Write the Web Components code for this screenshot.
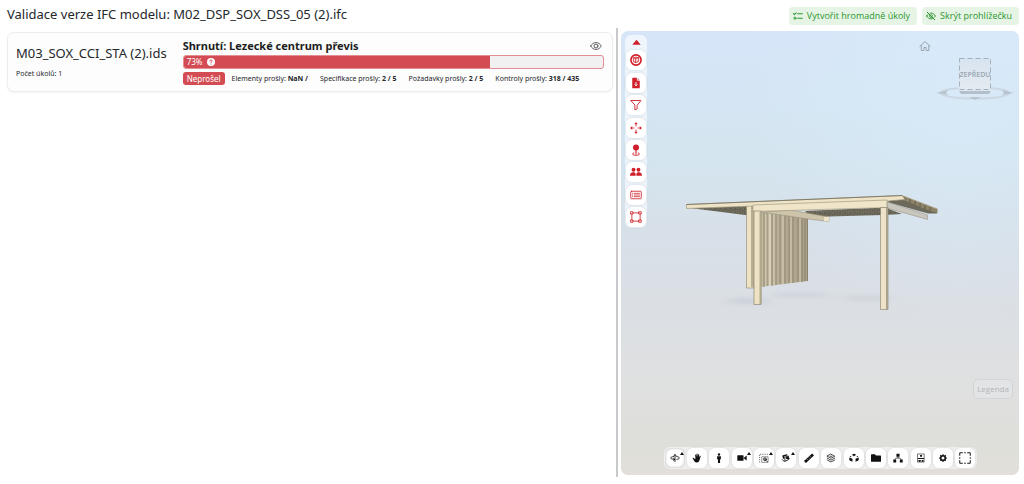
<!DOCTYPE html>
<html lang="cs">
<head>
<meta charset="utf-8">
<meta name="viewport" content="width=device-width, initial-scale=1">
<title>Validace verze IFC modelu</title>
<style>
  html, body { height: 100%; }
  body {
    margin: 0;
    background: #fff;
    color: #24272b;
    font-family: "Noto Sans", "Open Sans", sans-serif;
    font-size: 8px;
  }
</style>
</head>
<body>
<validation-app></validation-app>

<script>
const svg = (box, body) => `<svg viewBox="0 0 ${box} ${box}" fill="none" stroke="currentColor" stroke-linecap="round" stroke-linejoin="round" aria-hidden="true">${body}</svg>`;
const F = 'fill="currentColor" stroke="none"';

const ICONS = {
  tasks: svg(16, '<path stroke-width="1.7" d="M7.5 4.5H15M7.5 11.5H15M1 4.2l1.4 1.5L5 2.8"/><circle cx="3" cy="11.5" r="1.7" stroke-width="1.5"/>'),
  eyeOff: svg(16, '<path stroke-width="1.5" d="M1 8c1.600-3 4-4.600 7-4.600S13.400 5 15 8c-1.600 3-4 4.600-7 4.600S2.600 11 1 8z"/><circle cx="8" cy="8" r="2.300" stroke-width="1.500"/><path stroke="#e6f4e6" stroke-width="1.300" d="M3.500 1.500l11 11"/><path stroke-width="1.600" d="M2 2l12 12"/>'),
  eye: svg(16, '<path stroke-width="1.2" d="M1 8c1.600-3 4-4.600 7-4.600S13.400 5 15 8c-1.600 3-4 4.600-7 4.600S2.600 11 1 8z"/><circle cx="8" cy="8" r="2.600" stroke-width="1.300"/>'),
  help: svg(16, `<circle cx="8" cy="8" r="8" ${F}/><path stroke="#d44c53" stroke-width="2" d="M5.700 6.200c.1-1.500 1.100-2.200 2.300-2.200 1.300 0 2.300.8 2.300 2 0 1.500-2.300 1.600-2.300 3.200"/><circle cx="8" cy="12" r="1.200" fill="#d44c53" stroke="none"/>`),
  up: svg(16, `<path ${F} d="M8 3l7.500 9H.5z"/>`),
  home: svg(16, '<path stroke-width="1.300" d="M1 8.500L8 2l7 6.500M3 7.500V14h3.500v-4h3v4H13V7.500"/>'),
  model: svg(16, '<circle cx="8" cy="8" r="6.800" stroke-width="2.200"/><path fill="currentColor" fill-opacity=".15" stroke-width="1.100" d="M5 5l2.500-.8 4 .8v5l-4 1.500L5 10.500zM5 5l2.500.8 4-.8M7.500 5.800v5.700"/>'),
  fileDown: svg(16, `<path ${F} d="M4 1h5.500L13 4.500V15H3V2a1 1 0 0 1 1-1z"/><path stroke="#fff" stroke-width="1.200" d="M8 7v4.500M6.300 10l1.700 1.700L9.700 10M9.800 1v3.300H13"/>`),
  filter: svg(16, '<path stroke-width="1.200" d="M1.500 2h13L9.500 8.500V13l-3 1.500v-6z"/>'),
  move: svg(16, `<path stroke-width="1.100" d="M8 3.500V5.500M8 10.500v2M3.500 8H5.500M10.500 8h2"/><path ${F} d="M8 0l2.200 3H5.800zM8 16l2.200-3H5.800zM0 8l3-2.200v4.400zM16 8l-3-2.200v4.400z"/>`),
  pin: svg(16, `<circle cx="8" cy="4.500" r="4" ${F}/><path stroke-width="1.500" d="M8 8v5"/><path stroke-width="1.300" d="M5 12c-3 .8-2 3 3 3s6-2.200 3-3"/>`),
  people: svg(16, `<g ${F}><circle cx="4.700" cy="5" r="2.600"/><circle cx="11.300" cy="5" r="2.600"/><path d="M0 13c0-3 1.500-4.700 4-4.700 1.600 0 3 .6 3.500 2V13zM8.500 13v-2.700c.5-1.400 1.900-2 3.500-2 2.500 0 4 1.700 4 4.700z"/></g>`),
  list: svg(16, '<rect x="1" y="3" width="14" height="10" rx="1" stroke-width="1.100"/><path stroke-width="1" d="M3.300 5.800h.4M3.300 8h.4M3.300 10.200h.4M5.800 5.800h6.900M5.800 8h6.900M5.800 10.200h6.900"/>'),
  frame: svg(16, '<path stroke-width="1.100" d="M2.500 4v8M13.500 4v8M4 2.500h8M4 13.500h8"/><g stroke-width="1.100"><rect x="1" y="1" width="3" height="3"/><rect x="12" y="1" width="3" height="3"/><rect x="1" y="12" width="3" height="3"/><rect x="12" y="12" width="3" height="3"/></g>'),
  orbit: svg(16, '<path stroke-width="1.300" d="M8 14V3M6.500 4.200L8 2.200l1.500 2M6 5.500C2.500 6 1 7 1 8s2.500 2.300 6.500 2.300M10.500 5.500C13.500 6 15 7 15 8s-1.500 1.700-4 2.200M5.500 8.500l2.300 1.800-2.300 2"/>'),
  hand: svg(16, `<path ${F} d="M5.500 8.500L5 3.200c-.1-1.200 1.400-1.300 1.600-.1l.5 3.400.2-4.800c0-1.200 1.700-1.200 1.700 0l.2 4.800.8-4c.2-1.100 1.800-.8 1.600.3L11 7.500l1.300-2.600c.6-1 1.900-.4 1.500.7l-2 6.400c-.6 2-1.800 3-4 3-1.800 0-3-.6-4-2L1.200 8.800c-.5-1 .7-1.800 1.500-1L5 10z"/>`),
  person: svg(16, `<g ${F}><circle cx="8" cy="2.300" r="1.900"/><path d="M5 5h6v5H9.700v6H6.300v-6H5z"/></g>`),
  camera: svg(16, `<path ${F} d="M1.500 3.500h8a1 1 0 0 1 1 1v7a1 1 0 0 1-1 1h-8a1 1 0 0 1-1-1v-7a1 1 0 0 1 1-1zM11.500 7L15.500 4v8l-4-3z"/>`),
  zoomBox: svg(16, '<path stroke-width="1.200" stroke-dasharray="1.500 2" stroke-linecap="butt" d="M1 15V2h13"/><rect x="5" y="6" width="9.500" height="9" stroke-width=".7"/><circle cx="9.500" cy="10" r="2.300" stroke-width="1.300"/><path stroke-width="1.300" d="M11.400 12l2 2M8.800 10h1.400"/>'),
  section: svg(16, `<path ${F} d="M2 4l7-2 2 1.500-6 2v4.500L3 8.500z"/><path stroke-width="1.400" d="M6.500 6.500L12 5v5.500L7 13zM2 10.500L5.500 14M9 8l4.500 1"/><circle cx="10" cy="8" r="2" ${F}/>`),
  ruler: svg(16, '<path stroke-width="4.300" stroke-linecap="butt" d="M1.500 14.500L14.500 2.500"/><path stroke="#fff" stroke-width=".7" d="M5 10l1 1M7.500 7.700l1 1M10 5.500l1 1"/>'),
  layers: svg(16, '<path stroke-width="1.200" d="M8 2l6 3.200-6 3.200-6-3.200zM2 8.200l6 3.200 6-3.200M2 11.200l6 3.200 6-3.200M6.500 5.200h3"/>'),
  explode: svg(16, `<path ${F} d="M8 1l3.500 1.800L8 5 4.500 2.800zM.5 7L5.500 9v5L.5 11.500zM15.500 7l-5 2v5l5-2.500zM4 4.500L.8 6 3 6.800zM12 4.500L15.200 6 13 6.800z"/>`),
  folder: svg(16, `<path ${F} d="M1 2h5.300L8 4h7a1 1 0 0 1 1 1v8a1 1 0 0 1-1 1H1a1 1 0 0 1-1-1V3a1 1 0 0 1 1-1z"/>`),
  tree: svg(16, `<path ${F} d="M5.500 1h5v5h-5zM.5 10.500h4.600V15H.5zM10.900 10.500h4.600V15h-4.600z"/><path stroke-width="1.100" d="M8 6v2M3 10.500L5 8h6l2 2.500"/>`),
  properties: svg(16, `<rect x="3" y="1.500" width="10" height="13" stroke-width=".9"/><path ${F} d="M6.500 3h3v3h-3zM3 8h10v1.600H3zM4 11h3.500v3H4zM9 11h3v3H9z"/>`),
  gear: svg(16, `<circle cx="8" cy="8" r="3.700" stroke-width="2.600"/><path stroke-width="2" stroke-linecap="butt" d="M8 2v2M8 12v2M2 8h2M12 8h2M3.700 3.700L5 5M11 11l1.300 1.300M12.300 3.700L11 5M5 11l-1.300 1.300"/>`),
  fullscreen: svg(16, '<path stroke-width="1.300" d="M1 4.500V1h3.500M11.500 1H15v3.500M15 11.500V15h-3.500M4.500 15H1v-3.500M7.500 1h1M7.500 15h1M1 7.500v1M15 7.500v1"/>')
};

const define = (tag, html, setup) => {
  const template = document.createElement('template');
  template.innerHTML = html;
  customElements.define(tag, class extends HTMLElement {
    connectedCallback() {
      if (this.shadowRoot) return;
      this.attachShadow({ mode: 'open' }).append(template.content.cloneNode(true));
      if (setup) setup(this, this.shadowRoot);
    }
  });
};

define('ui-icon', `
<style>
  :host { display: block; flex: none; width: var(--icon-size, 12px); height: var(--icon-size, 12px); }
  span { display: contents; }
  svg { display: block; width: 100%; height: 100%; }
</style>
<span></span>`, (host, root) => {
  root.querySelector('span').innerHTML = ICONS[host.getAttribute('name')] || '';
});

define('action-button', `
<style>
  :host { display: block; }
  button {
    display: flex; align-items: center; gap: 4px;
    height: 18px; padding: 0 7px 0 4px;
    border: 0; border-radius: 4px;
    background: #e6f4e6; color: #2b962f;
    font: 500 9px/18px "Open Sans", sans-serif;
    white-space: nowrap; cursor: pointer;
  }
  ui-icon { --icon-size: 10px; }
</style>
<button type="button"><ui-icon></ui-icon><slot></slot></button>`, (host, root) => {
  const icon = document.createElement('ui-icon');
  icon.setAttribute('name', host.getAttribute('icon'));
  root.querySelector('ui-icon').replaceWith(icon);
});

define('tool-button', `
<style>
  :host { display: block; }
  button {
    position: relative; display: grid; place-items: center;
    width: 20px; height: 20px; padding: 0;
    border: 0; border-radius: 6px;
    background: #fff; color: inherit;
    box-shadow: 0 0 3px rgba(60, 70, 90, .14);
    cursor: pointer;
  }
  :host([active]) button { box-shadow: inset 0 0 3px rgba(40, 50, 60, .4); }
  :host([more]) button::after {
    content: ""; position: absolute; top: 4px; right: 1px;
    border: 2px solid transparent; border-top: 0; border-bottom: 3px solid #111;
  }
</style>
<button type="button"></button>`, (host, root) => {
  const button = root.querySelector('button');
  button.setAttribute('aria-label', host.getAttribute('label'));
  button.innerHTML = `<ui-icon name="${host.getAttribute('icon')}"></ui-icon>`;
});

define('progress-bar', `
<style>
  :host { display: block; }
  .track {
    box-sizing: border-box; height: 14px; overflow: hidden;
    border: 1px solid #e28e93; border-radius: 3px; background: #f1f1f1;
  }
  .fill {
    display: flex; align-items: center; gap: 5px; box-sizing: border-box;
    height: 100%; padding-left: 3px; background: #d44c53; color: #fff;
    font-size: 8px; line-height: 12px;
  }
  ui-icon { --icon-size: 8px; }
</style>
<div class="track" role="progressbar" aria-valuemin="0" aria-valuemax="100">
  <div class="fill"><span></span><ui-icon name="help"></ui-icon></div>
</div>`, (host, root) => {
  const value = host.getAttribute('value') + '%';
  root.querySelector('.track').setAttribute('aria-valuenow', host.getAttribute('value'));
  root.querySelector('.fill').style.width = value;
  root.querySelector('span').textContent = value;
});

define('ids-card', `
<style>
  :host {
    display: grid; grid-template-columns: auto minmax(0, 1fr); column-gap: 16px;
    box-sizing: border-box; min-height: 60px; padding: 4px 8px;
    border: 1px solid #ebedef; border-radius: 7px; background: #fdfdfd;
    box-shadow: 0 1px 2px rgba(40, 50, 70, .06);
  }
  .file { padding-top: 6px; }
  h2 { margin: 0; font-weight: 400; font-size: 13px; line-height: 20px; }
  .count { margin: 5px 0 0; font-size: 7px; line-height: 12px; }
  .head { display: flex; align-items: center; justify-content: space-between; height: 18px; padding-right: 2px; }
  h3 { margin: 0; font-weight: 700; font-size: 11px; line-height: 18px; color: #1b1d20; }
  .head button { padding: 0; border: 0; background: none; color: #555; cursor: pointer; }
  .foot { display: flex; align-items: center; gap: 7px; margin-top: 3px; line-height: 13px; }
  .badge { padding: 0 4px; border-radius: 3px; background: #d44c53; color: #fff; font-size: 8px; }
  .stats { display: flex; gap: 12px; white-space: nowrap; font-size: 7px; }
</style>
<div class="file">
  <h2><slot name="file"></slot></h2>
  <p class="count"><slot name="count"></slot></p>
</div>
<div>
  <div class="head"><h3><slot name="summary"></slot></h3><button type="button" aria-label="Zobrazit"><ui-icon name="eye"></ui-icon></button></div>
  <progress-bar value="73"></progress-bar>
  <div class="foot"><span class="badge"><slot name="status"></slot></span><div class="stats"><slot></slot></div></div>
</div>`);

define('model-scene', `
<style>
  :host { display: block; min-height: 0; }
  svg { display: block; width: 100%; height: 100%; }
</style>
<svg viewBox="621 31 398 444" preserveAspectRatio="xMidYMid slice" role="img" aria-label="Model">
  <defs>
    <filter id="soft" x="-50%" y="-200%" width="200%" height="500%"><feGaussianBlur stdDeviation="6 2"/></filter>
    <pattern id="grain" width="5" height="4" patternUnits="userSpaceOnUse">
      <rect width="5" height="4" fill="#6c685a"/>
      <path d="M0 0h1v1H0zM2 2h1v1H2zM4 1h1v1H4z" fill="#5d5a4e"/><path d="M1 3h1v1H1zM3 0h1v1H3z" fill="#777361"/>
    </pattern>
    <linearGradient id="side" x1="0" x2="1"><stop stop-color="#c2b99f"/><stop offset="1" stop-color="#a79e86"/></linearGradient>
  </defs>
  <g fill="#8d99a5" opacity=".2" filter="url(#soft)">
    <ellipse cx="748" cy="301" rx="22" ry="3"/><ellipse cx="800" cy="295" rx="30" ry="2"/><ellipse cx="868" cy="298" rx="26" ry="2"/>
  </g>
  <path d="M690 208L760 205.500V216L745 215z" fill="url(#grain)"/>
  <path d="M805 211L885 207.500 902 214 884 215 810 217z" fill="url(#grain)"/>
  <path d="M761 212L808 218V281L761 287z" fill="url(#side)"/>
  <path d="M764 213V287M767 213V286M772 214V286M776 214V285M780 215V284M785 215V284M789 216V283M793 216V283M798 217V282M802 217V282M805 218V281M807.500 218V281" stroke="#857d69" stroke-width=".8" fill="none"/>
  <path d="M770 214V286" stroke="#f5efdb" stroke-width="1"/>
  <path d="M766 214V286M774 214V285M783 215V284M791 216V283M800 217V282" stroke="#d7ceb3" stroke-width="1" fill="none"/>
  <path d="M761 212L790 210 829 217V221.500L808 219z" fill="#cdc4aa" stroke="#99917b" stroke-width=".6"/>
  <path d="M829 217V221.500L824 221V217z" fill="#eee4c9"/>
  <path d="M746.500 205.500H753.500V288H746.500z" fill="#eee2c5" stroke="#8d846c" stroke-width=".6"/>
  <path d="M751 206H754V287H751z" fill="#b8ae92"/>
  <path d="M902 195.500L937 209V213.500L928 213.500 887 202z" fill="#6c685a"/>
  <path d="M887 202L927.500 215V219.500L887 208z" fill="#c9c6bd" stroke="#9a9588" stroke-width=".6"/>
  <path d="M902 195.500L937.500 209V213L930 211 903 200z" fill="#8d8369"/>
  <path d="M905 197.500V200M910 199V203M915 201V205M920 203V207M925 205V209M930 207V211" stroke="#615a48" stroke-width="1"/>
  <path d="M902 195.500L937.500 209" stroke="#b8ad90" stroke-width=".8"/>
  <path d="M686.500 204.500L902 195.500 905 199.500 887 201 753 206 686.500 208.500z" fill="#eee3c7" stroke="#a2987d" stroke-width=".7"/>
  <path d="M753 205L887 200V207.500L753 211.500z" fill="#f0e5c9" stroke="#9a9076" stroke-width=".6"/>
  <path d="M686.500 204.500L902 195.500" stroke="#74705e" stroke-width=".8"/>
  <path d="M754 211H761V304.500H754z" fill="#eee2c5" stroke="#827963" stroke-width=".6"/>
  <path d="M759.500 212H761.500V304H759.500z" fill="#b2a98d"/>
  <path d="M880.500 207.500H888V309.500H880.500z" fill="#eee3c9" stroke="#847d69" stroke-width=".6"/>
  <path d="M886 208H888V309H886z" fill="#aaa28b"/>
</svg>`);

define('view-cube', `
<style>
  :host { display: flex; align-items: flex-start; color: #98a3ad; }
  button { padding: 0; border: 0; background: none; color: inherit; cursor: pointer; }
  .stage { display: grid; justify-items: center; width: 78px; margin-left: 5px; padding-top: 18px; }
  .face {
    grid-area: 1 / 1; position: relative; box-sizing: border-box; width: 32px; height: 32px;
    background: linear-gradient(#d7e4f0, #e4eaf0);
    font: 600 7px/34px "Noto Sans", sans-serif; text-align: center; color: #9daab5;
  }
  .face svg { position: absolute; inset: 0; }
  .face span { display: flex; justify-content: center; }
  .ring { grid-area: 1 / 1; margin-top: 27px; }
</style>
<button type="button" aria-label="Domů"><ui-icon name="home"></ui-icon></button>
<div class="stage">
  <svg class="ring" width="78" height="18" viewBox="0 0 78 18" fill="none" aria-hidden="true">
    <ellipse cx="39" cy="8" rx="34" ry="5.500" stroke="#cbd7e2" stroke-width="2"/>
    <path d="M0 8l12-3-2 3 2 2zM78 8L66 5l2 3-2 2zM33 12h12l-6 3z" fill="#b8c3cd"/>
    <path d="M23 6h32l-2 3H25z" fill="#b4bfc9"/>
  </svg>
  <button type="button" class="face"><svg width="32" height="32" viewBox="0 0 32 32" fill="none" aria-hidden="true"><rect x=".5" y=".5" width="31" height="31" stroke="#a5b0ba" stroke-dasharray="5 3"/></svg><span>ZEPŘEDU</span></button>
</div>`);

define('model-viewer-panel', `
<style>
  :host {
    display: grid; grid-template: minmax(0, 1fr) / minmax(0, 1fr); overflow: hidden; border-radius: 7px;
    background:
      radial-gradient(ellipse at 85% 8%, rgba(217, 236, 250, .7), transparent 45%),
      linear-gradient(#d6e5f9 0%, #d4e5ef 28%, #d7e0e9 44%, #dbdfe4 62%, #dfe0e0 80%, #dedfd9 94%, #e3dfda 100%);
  }
  model-scene, .overlay { grid-area: 1 / 1; }
  .overlay {
    position: relative; display: grid; box-sizing: border-box; padding: 4px;
    grid-template: auto 1fr auto / auto 1fr;
  }
  nav {
    display: flex; flex-direction: column; align-items: center; justify-content: space-between;
    box-sizing: border-box; width: 22px; height: 193px; padding: 1px;
    border-radius: 6px; background: rgba(246, 249, 253, .75); color: #cf1f2b;
  }
  nav .collapse { display: grid; place-items: center; width: 20px; height: 12px; padding: 0; border: 0; background: none; color: inherit; cursor: pointer; --icon-size: 9px; }
  view-cube { justify-self: end; align-self: start; margin: 5px 1px 0 0; }
  .legend {
    grid-area: 2 / 2; justify-self: end; align-self: end; margin: 0 2px 48px 0;
    width: 40px; height: 20px; padding: 0;
    border: 1px solid #d2d4d5; border-radius: 5px; background: #e3e4e5; color: #b2b5b8;
    font: 400 8px/18px "Open Sans", sans-serif; cursor: pointer;
  }
  .bottom {
    grid-area: 3 / 1 / 4 / 3; justify-self: center; margin-bottom: 2px;
    display: flex; justify-content: space-between; box-sizing: border-box; width: 313px; padding: 1px;
    border-radius: 6px; background: rgba(242, 243, 243, .8); color: #111; --icon-size: 10px;
  }
  .bottom [icon="fullscreen"] { --icon-size: 12px; }
</style>
<model-scene></model-scene>
<div class="overlay">
  <nav aria-label="Nástroje modelu">
    <button type="button" class="collapse" aria-label="Sbalit"><ui-icon name="up"></ui-icon></button>
    <tool-button icon="model" label="Model"></tool-button>
    <tool-button icon="fileDown" label="Stáhnout"></tool-button>
    <tool-button icon="filter" label="Filtr"></tool-button>
    <tool-button icon="move" label="Posun"></tool-button>
    <tool-button icon="pin" label="Poloha"></tool-button>
    <tool-button icon="people" label="Lidé"></tool-button>
    <tool-button icon="list" label="Seznam"></tool-button>
    <tool-button icon="frame" label="Výběr"></tool-button>
  </nav>
  <view-cube></view-cube>
  <button type="button" class="legend">Legenda</button>
  <div class="bottom" role="toolbar" aria-label="Pohled">
    <tool-button icon="orbit" label="Otáčení" active more></tool-button>
    <tool-button icon="hand" label="Posouvání"></tool-button>
    <tool-button icon="person" label="Chůze"></tool-button>
    <tool-button icon="camera" label="Kamera" more></tool-button>
    <tool-button icon="zoomBox" label="Přiblížení" more></tool-button>
    <tool-button icon="section" label="Řez" more></tool-button>
    <tool-button icon="ruler" label="Měření"></tool-button>
    <tool-button icon="layers" label="Vrstvy"></tool-button>
    <tool-button icon="explode" label="Rozklad"></tool-button>
    <tool-button icon="folder" label="Soubory"></tool-button>
    <tool-button icon="tree" label="Strom"></tool-button>
    <tool-button icon="properties" label="Vlastnosti"></tool-button>
    <tool-button icon="gear" label="Nastavení"></tool-button>
    <tool-button icon="fullscreen" label="Celá obrazovka"></tool-button>
  </div>
</div>`);

define('validation-app', `
<style>
  :host { display: flex; flex-direction: column; box-sizing: border-box; min-height: 100vh; padding: 0 5px 7px 7px; }
  header { display: flex; align-items: center; justify-content: space-between; height: 28px; }
  h1 { margin: 0; font-weight: 400; font-size: 13px; line-height: 20px; }
  .actions { display: flex; gap: 5px; padding: 3px 0 0; }
  main { flex: 1; display: grid; grid-template-columns: minmax(0, 606fr) 2px minmax(0, 398fr); column-gap: 3px; }
  ids-card { margin-top: 4px; align-self: start; }
  .divider { background: #c9c9cb; }
  model-viewer-panel { margin: 3px 0 2px; }
</style>
<header>
  <h1>Validace verze IFC modelu: M02_DSP_SOX_DSS_05 (2).ifc</h1>
  <div class="actions">
    <action-button icon="tasks">Vytvořit hromadně úkoly</action-button>
    <action-button icon="eyeOff">Skrýt prohlížečku</action-button>
  </div>
</header>
<main>
  <ids-card>
    <span slot="file">M03_SOX_CCI_STA (2).ids</span>
    <span slot="count">Počet úkolů: 1</span>
    <span slot="summary">Shrnutí: Lezecké centrum převis</span>
    <span slot="status">Neprošel</span>
    <span>Elementy prošly: <b>NaN /</b></span>
    <span>Specifikace prošly: <b>2 / 5</b></span>
    <span>Požadavky prošly: <b>2 / 5</b></span>
    <span>Kontroly prošly: <b>318 / 435</b></span>
  </ids-card>
  <div class="divider" role="separator"></div>
  <model-viewer-panel></model-viewer-panel>
</main>`);
</script>
</body>
</html>
